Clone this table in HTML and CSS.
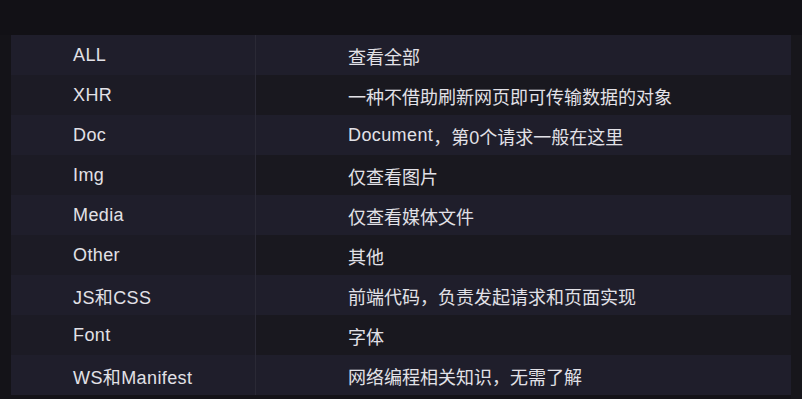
FILE: index.html
```html
<!DOCTYPE html>
<html lang="zh-CN">
<head>
<meta charset="utf-8">
<link rel="stylesheet" href="styles.css">
</head>
<body>
<div class="top"></div>
<div class="wrap">
  <div class="table">
    <div class="row"><div class="c1">ALL</div><div class="c2">查看全部</div></div>
    <div class="row"><div class="c1">XHR</div><div class="c2">一种不借助刷新网页即可传输数据的对象</div></div>
    <div class="row"><div class="c1">Doc</div><div class="c2"><span class="lat">Document</span>，第0个请求一般在这里</div></div>
    <div class="row"><div class="c1">Img</div><div class="c2">仅查看图片</div></div>
    <div class="row"><div class="c1">Media</div><div class="c2">仅查看媒体文件</div></div>
    <div class="row"><div class="c1">Other</div><div class="c2">其他</div></div>
    <div class="row"><div class="c1">JS和CSS</div><div class="c2">前端代码，负责发起请求和页面实现</div></div>
    <div class="row"><div class="c1">Font</div><div class="c2">字体</div></div>
    <div class="row"><div class="c1">WS和Manifest</div><div class="c2">网络编程相关知识，无需了解</div></div>
  </div>
  <div class="side"></div>
</div>
</body>
</html>
```
FILE: styles.css
```css
html, body {
  margin: 0;
  padding: 0;
  width: 802px;
  height: 399px;
  overflow: hidden;
  background: #141318;
  font-family: "Liberation Sans", "Noto Sans CJK SC", sans-serif;
  color: #e2e1e7;
}
.top {
  height: 35px;
  background: #121116;
}
.wrap {
  display: flex;
  padding-left: 11px;
  height: 364px;
}
.table {
  width: 780px;
  display: flex;
  flex-direction: column;
}
.side {
  flex: 1;
  background: #17161b;
}
.row {
  display: flex;
  height: 40px;
  align-items: stretch;
  font-size: 18px;
}
.c1 {
  width: 182px;
  padding-left: 62px;
  padding-top: 1px;
  border-right: 1px solid #2a2935;
  display: flex;
  align-items: center;
  letter-spacing: 0.4px;
}
.c2 {
  flex: 1;
  padding-left: 92px;
  padding-top: 1px;
  display: flex;
  align-items: center;
}
.lat {
  letter-spacing: 0.4px;
}
.row:nth-child(odd) .c1,
.row:nth-child(odd) .c2 {
  background: #1f1e2b;
}
.row:nth-child(even) .c1 {
  background: #1c1b25;
}
.row:nth-child(even) .c2 {
  background: #19181f;
}
```
